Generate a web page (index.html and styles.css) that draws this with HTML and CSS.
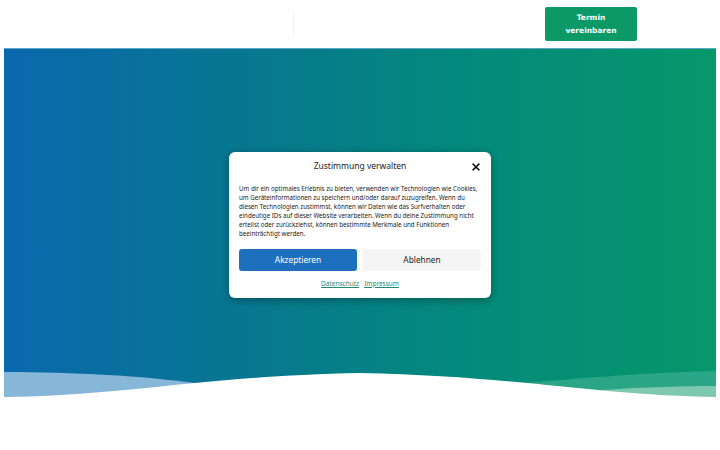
FILE: index.html
```html
<!DOCTYPE html>
<html lang="de">
<head>
<meta charset="utf-8">
<title>Zustimmung verwalten</title>
<link rel="stylesheet" href="styles.css">
</head>
<body>
<header class="site-header">
  <div class="brand"></div>
  <div class="divider"></div>
  <div class="spacer"></div>
  <a class="cta" href="#">Termin<br>vereinbaren</a>
</header>
<section class="hero">
  <div class="consent">
    <div class="consent-head">
      <span class="consent-title">Zustimmung verwalten</span>
      <svg class="close" viewBox="0 0 10 10" width="8" height="8"><path d="M1.5 1.5 L8.5 8.5 M8.5 1.5 L1.5 8.5" stroke="#111" stroke-width="2" stroke-linecap="square"/></svg>
    </div>
    <p class="consent-text">Um dir ein optimales Erlebnis zu bieten, verwenden wir Technologien wie Cookies, um Geräteinformationen zu speichern und/oder darauf zuzugreifen. Wenn du diesen Technologien zustimmst, können wir Daten wie das Surfverhalten oder eindeutige IDs auf dieser Website verarbeiten. Wenn du deine Zustimmung nicht erteilst oder zurückziehst, können bestimmte Merkmale und Funktionen beeinträchtigt werden.</p>
    <div class="consent-actions">
      <button class="btn btn-accept">Akzeptieren</button>
      <button class="btn btn-deny">Ablehnen</button>
    </div>
    <div class="consent-links">
      <a href="#">Datenschutz</a>
      <a href="#">Impressum</a>
    </div>
  </div>
  <svg class="waves" viewBox="0 0 712 30" preserveAspectRatio="none">
    <path d="M0 4 C70 4 140 8 190 15 L190 30 L0 30 Z" fill="#86b6d8"/>
    <path d="M500 30 L520 15 C600 8 660 4 712 3 L712 30 Z" fill="#2aa585"/>
    <path d="M560 30 L600 22 C640 19 680 18 712 18 L712 30 Z" fill="#7dc8ae"/>
    <path d="M0 29 C120 28 200 8 356 5 C512 8 600 28 712 29 L712 30 L0 30 Z" fill="#ffffff"/>
  </svg>
</section>
<div class="below"></div>
</body>
</html>
```

FILE: styles.css
```css
* { box-sizing: border-box; }
html, body { margin: 0; padding: 0; background: #fff; }
body { font-family: "Noto Sans", "DejaVu Sans", sans-serif; color: #222; width: 720px; height: 450px; overflow: hidden; }

.site-header {
  height: 48px;
  display: flex;
  align-items: center;
  padding: 0 83px 0 0;
}
.brand { width: 293px; }
.divider { width: 1px; height: 24px; background: #f0f0f0; }
.spacer { flex: 1; }
.cta {
  display: block;
  width: 92px;
  height: 34px;
  padding-top: 4px;
  background: #0b9968;
  border-radius: 2px;
  color: #fff;
  text-decoration: none;
  text-align: center;
  font-family: "DejaVu Sans", sans-serif;
  font-weight: bold;
  font-size: 7.5px;
  line-height: 13px;
}

.hero {
  position: relative;
  margin: 0 4px;
  height: 350px;
  background: linear-gradient(90deg, #0a68ae 0%, #07788f 35%, #048a7c 65%, #06976a 100%);
  border-top: 1px solid #5fa7c7;
  display: flex;
  align-items: center;
  justify-content: center;
  padding-top: 2px;
}
.waves {
  position: absolute;
  left: 0;
  bottom: 0;
  width: 712px;
  height: 30px;
  display: block;
}

.consent {
  position: relative;
  z-index: 2;
  width: 262px;
  height: 146px;
  background: #fff;
  border-radius: 6px;
  box-shadow: 0 2px 8px rgba(0,0,0,0.35);
  padding: 7px 10px 0 10px;
  display: flex;
  flex-direction: column;
}
.consent-head {
  display: flex;
  align-items: center;
  justify-content: center;
  position: relative;
  height: 14px;
}
.consent-title { font-size: 8.5px; color: #222; }
.close { position: absolute; right: 1px; top: 4px; }
.consent-text {
  margin: 11px 0 0 0;
  font-size: 6.2px;
  line-height: 9px;
  color: #222;
}
.consent-actions {
  display: flex;
  gap: 6px;
  margin-top: 11px;
}
.btn {
  flex: 1;
  height: 22px;
  border: none;
  border-radius: 3px;
  font-family: "Noto Sans", "DejaVu Sans", sans-serif;
  font-size: 8.3px;
  padding: 0;
}
.btn-accept { background: #1f6fbf; color: #fff; }
.btn-deny { background: #f5f5f5; color: #222; }
.consent-links {
  display: flex;
  justify-content: center;
  gap: 5px;
  margin-top: 8px;
  font-size: 6.5px;
}
.consent-links a { color: #1e8c78; text-decoration: underline; }
.below { height: 52px; }
```
